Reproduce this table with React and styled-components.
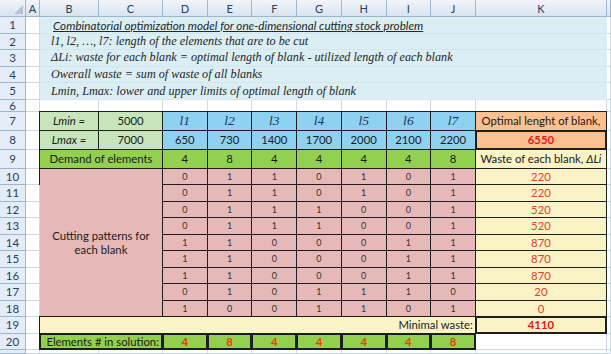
import React from 'react';
import styled, { createGlobalStyle, css } from 'styled-components';

const GlobalStyle = createGlobalStyle`
  *, *::before, *::after { box-sizing: border-box; }
  html, body { margin: 0; padding: 0; background: #fff; }
  body { overflow: hidden; }
`;

const SANS = `Lato, "Open Sans", "Liberation Sans", sans-serif`;
const SERIF = `"Liberation Serif", "DejaVu Serif", serif`;

const Sheet = styled.div`
  display: grid;
  width: 611px;
  height: 354px;
  overflow: hidden;
  grid-template-columns: 26px 14px 59px 64px repeat(7, 44.71px) 131px 1fr;
  grid-template-rows: 17px repeat(5, 16.6px) 12px repeat(3, 19px) repeat(11, 16.5px) 1fr;
  font-family: ${SANS};
  background: #fff;
`;

const ColHead = styled.div`
  display: flex;
  align-items: center;
  justify-content: center;
  background: linear-gradient(#f1f5fb, #d9e3ef);
  border-right: 1px solid #9eb6ce;
  border-bottom: 1px solid #9eb6ce;
  color: #2a3f5c;
  font-size: 11px;
`;

const Corner = styled(ColHead)`
  align-items: flex-end;
  justify-content: flex-end;
  padding: 0 2px 2px 0;
`;

const RowHead = styled.div`
  display: flex;
  align-items: center;
  justify-content: center;
  overflow: hidden;
  background: #e4ecf7;
  border-right: 1px solid #9eb6ce;
  border-bottom: 1px solid #9eb6ce;
  color: #2a3f5c;
  font-size: 11.5px;
  line-height: 1;
`;

const Blank = styled.div`
  grid-column: span ${p => p.$span || 1};
  border-right: 1px solid #d0d7e5;
  border-bottom: 1px solid #d0d7e5;
`;

const Band = styled.div`
  grid-column: span 10;
  display: flex;
  align-items: center;
  padding-left: ${p => (p.$title ? 13 : 11)}px;
  background: #daeef3;
  border-bottom: 1px solid #d2e7ee;
  white-space: nowrap;
  overflow: hidden;
  font-style: italic;
  color: #262626;
  ${p =>
    p.$title
      ? css`
          font-family: ${SANS};
          font-size: 11.7px;
          text-decoration: underline;
        `
      : css`
          font-family: ${SERIF};
          font-size: 12.2px;
        `}
`;

const Cell = styled.div`
  grid-column: span ${p => p.$span || 1};
  grid-row: span ${p => p.$rows || 1};
  margin: -1px 0 0 -1px;
  border: ${p => (p.$thick ? 2 : 1)}px solid #1e1e1e;
  background: ${p => p.$bg};
  color: ${p => p.$color || '#1a1a1a'};
  font-size: ${p => p.$size || 11.3}px;
  font-weight: ${p => (p.$bold ? 700 : 400)};
  font-style: ${p => (p.$italic ? 'italic' : 'normal')};
  font-family: ${p => (p.$serif ? SERIF : SANS)};
  display: flex;
  align-items: center;
  justify-content: ${p =>
    p.$align === 'right' ? 'flex-end' : p.$align === 'left' ? 'flex-start' : 'center'};
  text-align: center;
  padding: 0 ${p => (p.$align === 'right' ? 2 : 1)}px 0 1px;
  white-space: ${p => (p.$wrap ? 'normal' : 'nowrap')};
  overflow: hidden;
  line-height: 14px;
`;

const Em = styled.i`
  font-style: italic;
`;

const C = {
  green: '#c6e5bb',
  sky: '#8fd1f1',
  lime: '#92d050',
  pink: '#e6b9b8',
  cream: '#faf3c6',
  peach: '#fac090',
  red: '#e1412d',
  boldRed: '#e8141b',
  orange: '#ee3a0c',
};

const lengths = [650, 730, 1400, 1700, 2000, 2100, 2200];
const demand = [4, 8, 4, 4, 4, 4, 8];
const patterns = [
  [0, 1, 1, 0, 1, 0, 1],
  [0, 1, 1, 0, 1, 0, 1],
  [0, 1, 1, 1, 0, 0, 1],
  [0, 1, 1, 1, 0, 0, 1],
  [1, 1, 0, 0, 0, 1, 1],
  [1, 1, 0, 0, 0, 1, 1],
  [1, 1, 0, 0, 0, 1, 1],
  [0, 1, 0, 1, 1, 1, 0],
  [1, 0, 0, 1, 1, 0, 1],
];
const waste = [220, 220, 520, 520, 870, 870, 870, 20, 0];
const solution = [4, 8, 4, 4, 4, 4, 8];
const letters = ['A', 'B', 'C', 'D', 'E', 'F', 'G', 'H', 'I', 'J', 'K'];
const notes = [
  { title: true, text: 'Combinatorial optimization model for one-dimensional cutting stock problem' },
  { text: 'l1, l2, \u2026, l7: length of the elements that are to be cut' },
  { text: '\u0394Li: waste for each blank = optimal length of blank - utilized length of each blank' },
  { text: 'Owerall waste = sum of waste of all blanks' },
  { text: 'Lmin, Lmax: lower and upper limits of optimal length of blank' },
];

const Lead = ({ n }) => (
  <>
    <RowHead>{n}</RowHead>
    <Blank />
  </>
);

export default function App() {
  return (
    <>
      <GlobalStyle />
      <Sheet>
        <Corner>
          <svg width="9" height="9" viewBox="0 0 9 9">
            <polygon points="9,0 9,9 0,9" fill="#b4c4d8" />
          </svg>
        </Corner>
        {letters.map(l => (
          <ColHead key={l}>{l}</ColHead>
        ))}
        <ColHead />

        {notes.map((n, i) => (
          <React.Fragment key={i}>
            <Lead n={i + 1} />
            <Band $title={n.title}>{n.text}</Band>
            <Blank />
          </React.Fragment>
        ))}

        <Lead n={6} />
        {Array.from({ length: 11 }).map((_, i) => (
          <Blank key={i} />
        ))}

        <Lead n={7} />
        <Cell $bg={C.green} $italic>Lmin =</Cell>
        <Cell $bg={C.green}>5000</Cell>
        {lengths.map((_, i) => (
          <Cell key={i} $bg={C.sky} $serif $italic $size={13.5} $color="#1b3560">
            l{i + 1}
          </Cell>
        ))}
        <Cell $bg={C.peach}>Optimal lenght of blank,</Cell>
        <Blank />

        <Lead n={8} />
        <Cell $bg={C.green} $italic>Lmax =</Cell>
        <Cell $bg={C.green}>7000</Cell>
        {lengths.map((v, i) => (
          <Cell key={i} $bg={C.sky}>{v}</Cell>
        ))}
        <Cell $bg={C.peach} $thick $bold $color={C.boldRed}>6550</Cell>
        <Blank />

        <Lead n={9} />
        <Cell $bg={C.lime} $span={2}>Demand of elements</Cell>
        {demand.map((v, i) => (
          <Cell key={i} $bg={C.lime}>{v}</Cell>
        ))}
        <Cell $bg={C.cream}>
          Waste of each blank,&nbsp;<Em>{'\u0394Li'}</Em>
        </Cell>
        <Blank />

        {patterns.map((row, r) => (
          <React.Fragment key={r}>
            <Lead n={10 + r} />
            {r === 0 && (
              <Cell $bg={C.pink} $span={2} $rows={9} $wrap>
                Cutting patterns for
                <br />
                each blank
              </Cell>
            )}
            {row.map((v, i) => (
              <Cell key={i} $bg={C.pink} $size={9} $color="#333">
                {v}
              </Cell>
            ))}
            <Cell $bg={C.cream} $color={C.red}>{waste[r]}</Cell>
            <Blank />
          </React.Fragment>
        ))}

        <Lead n={19} />
        <Cell $bg={C.cream} $span={9} $align="right">Minimal waste:</Cell>
        <Cell $bg={C.cream} $thick $bold $color={C.boldRed}>4110</Cell>
        <Blank />

        <Lead n={20} />
        <Cell $bg={C.lime} $span={2} $thick $align="right">Elements # in solution:</Cell>
        {solution.map((v, i) => (
          <Cell key={i} $bg={C.lime} $thick $bold $color={C.orange}>{v}</Cell>
        ))}
        <Blank />
        <Blank />

        <Lead n="" />
        {Array.from({ length: 11 }).map((_, i) => (
          <Blank key={i} />
        ))}
      </Sheet>
    </>
  );
}
